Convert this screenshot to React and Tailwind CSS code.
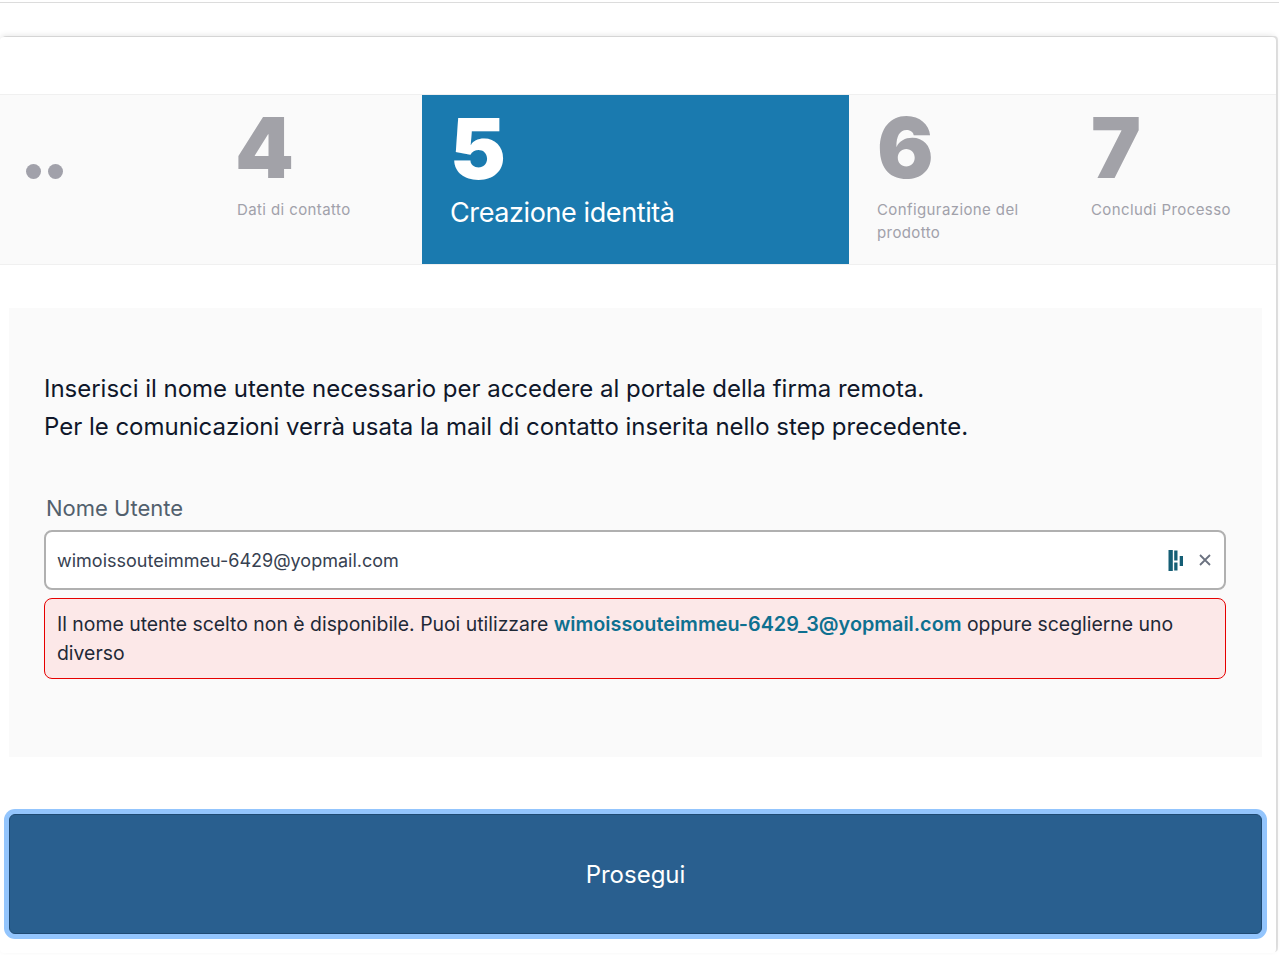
const font = { fontFamily: "Inter, sans-serif" };

function Step({ num, label, digitClass = "" }) {
  return (
    <div className="px-7 pt-[7px]">
      <div className={"text-[84px] leading-[92px] font-black text-[#a2a2a8] " + digitClass}>{num}</div>
      <div className="mt-[4px] text-[15px] leading-[23px] tracking-[0.4px] text-[#a1a1aa]">{label}</div>
    </div>
  );
}

function Logo() {
  return (
    <svg width="16" height="21" viewBox="0 0 16 21" className="text-[#155e75]" fill="currentColor">
      <path d="M0.5 0h4.3v21h-4.3z" />
      <path d="M6.2 0.5h3.3v10h-3.3z" />
      <path d="M6.2 12.5h3.3v8h-3.3z" />
      <path d="M11.7 6h3.3v10h-3.3z" />
    </svg>
  );
}

export default function App() {
  return (
    <div className="h-[955px] w-[1280px] overflow-hidden bg-white" style={font}>
      <div className="mr-[1px] h-[3px] border-b border-[#dcdcdc]" />
      <div className="mr-[4px] mt-[34px] h-[916px] rounded-sm bg-white shadow-[0_-2px_6px_-1px_rgba(0,0,0,0.12),2px_-1px_0_0_rgba(0,0,0,0.1)]">
        <div className="h-[57px]" />
        <div className="grid h-[171px] grid-cols-[209px_213px_427px_214px_1fr] border-y border-[#f0f0f0] bg-[#fafafa]">
          <div className="flex items-start gap-[7px] pl-[26px] pt-[69px]">
            <span className="h-[15px] w-[15px] rounded-full bg-[#a1a1aa]" />
            <span className="h-[15px] w-[15px] rounded-full bg-[#a1a1aa]" />
          </div>
          <Step num="4" label="Dati di contatto" digitClass="-ml-[2px]" />
          <div className="bg-[#1a7aaf] px-7 pt-[8px] text-white">
            <div className="text-[84px] leading-[92px] font-black">5</div>
            <div className="mt-[1px] text-[27px] leading-[34px] tracking-[-0.4px]">Creazione identità</div>
          </div>
          <Step num="6" label="Configurazione del prodotto" />
          <Step num="7" label="Concludi Processo" />
        </div>

        <div className="ml-[9px] mr-[14px] mt-[43px] h-[449px] bg-[#fafafa] px-[35px] pt-[62px]">
          <p className="text-[24px] leading-[38px] tracking-[-0.02px] text-[#0f172a]">
            Inserisci il nome utente necessario per accedere al portale della firma remota.
            <br />
            Per le comunicazioni verrà usata la mail di contatto inserita nello step precedente.
          </p>
          <div className="mt-[48px] pl-[2px] text-[22px] leading-[28px] text-[#52606d]">Nome Utente</div>
          <div className="mr-[1px] mt-[8px] flex h-[60px] items-center rounded-lg border-2 border-[#b0b0b0] bg-white pl-[11px] pr-[13px]">
            <span className="flex-1 pt-[2px] text-lg text-[#374151]">wimoissouteimmeu-6429@yopmail.com</span>
            <Logo />
            <svg width="12" height="12" viewBox="0 0 12 12" className="ml-[15px]" fill="none" stroke="#6b7280" strokeWidth="1.8">
              <path d="M1 1l10 10M11 1L1 11" />
            </svg>
          </div>
          <div className="mr-[1px] mt-[8px] rounded-lg border border-[#e60000] bg-[#fce8e8] px-[12px] py-[11px] text-[19.4px] leading-[28.5px] text-[#1f2937]">
            Il nome utente scelto non è disponibile. Puoi utilizzare{" "}
            <span className="text-[19.8px] font-semibold text-[#0e7090]">wimoissouteimmeu-6429_3@yopmail.com</span> oppure sceglierne uno diverso
          </div>
        </div>

        <div className="ml-[9px] mr-[14px] mt-[57px] flex h-[120px] items-center justify-center rounded-md border border-[#1e4a73] bg-[#295f8f] pt-[2px] text-[24px] text-white shadow-[0_0_0_5px_#93c5fd]">
          Prosegui
        </div>
      </div>
    </div>
  );
}
